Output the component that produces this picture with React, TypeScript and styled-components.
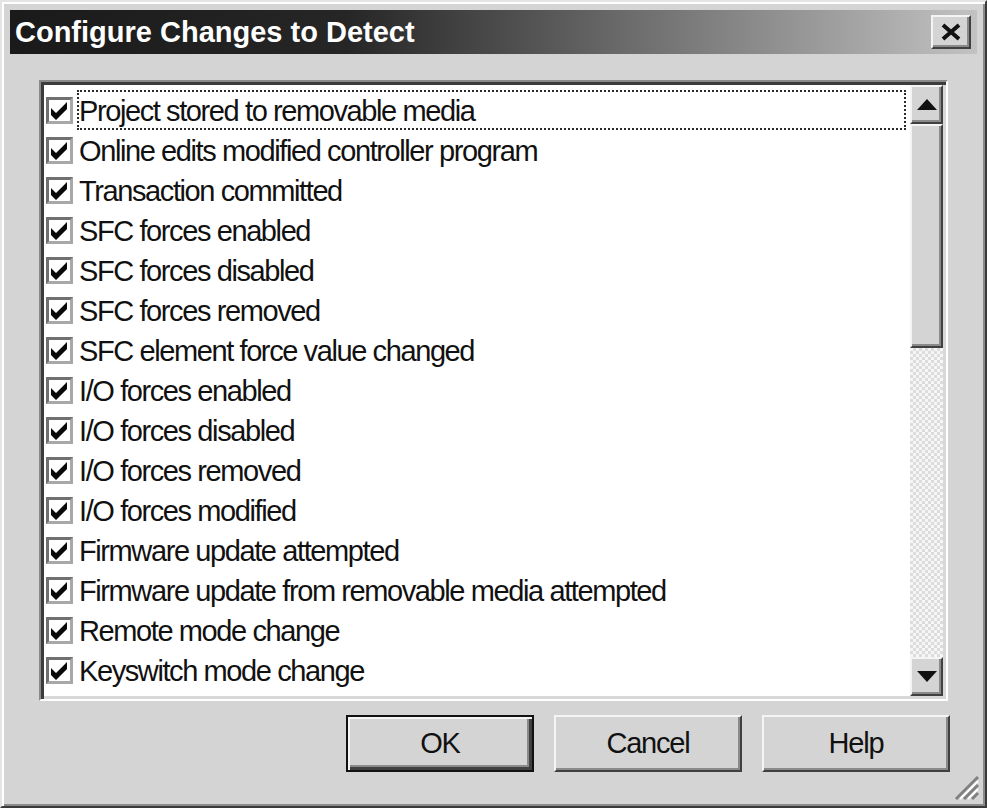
import React from "react";
import styled, { createGlobalStyle } from "styled-components";

const GlobalStyle = createGlobalStyle`
  html, body {
    margin: 0;
    padding: 0;
    background: #d4d4d4;
  }
  * {
    box-sizing: border-box;
  }
`;

const Window = styled.div`
  position: relative;
  width: 987px;
  height: 808px;
  display: flex;
  flex-direction: column;
  padding: 8px;
  background: #d4d4d4;
  border: 2px solid;
  border-color: #e4e4e4 #3a3a3a #3a3a3a #e4e4e4;
  box-shadow: inset 2px 2px #ffffff, inset -2px -2px #8a8a8a;
  font-family: "Liberation Sans", Arial, sans-serif;
`;

const TitleBar = styled.div`
  height: 44px;
  display: flex;
  align-items: center;
  justify-content: space-between;
  padding: 0 6px 0 5px;
  background: linear-gradient(to right, #1a1a1a 0%, #262626 35%, #7a7a7a 70%, #c2c2c2 100%);
`;

const Title = styled.span`
  color: #ffffff;
  font-weight: bold;
  font-size: 29px;
  line-height: 1;
`;

const Raised = styled.div`
  background: #d4d4d4;
  border: 2px solid;
  border-color: #f4f4f4 #404040 #404040 #f4f4f4;
  box-shadow: inset -2px -2px #8a8a8a;
  display: flex;
  align-items: center;
  justify-content: center;
`;

const CloseButton = styled(Raised)`
  width: 40px;
  height: 34px;
`;

const Body = styled.div`
  flex: 1;
  display: flex;
  flex-direction: column;
  padding: 26px 29px 0;
`;

const ListBox = styled.div`
  height: 621px;
  display: flex;
  background: #ffffff;
  border: 2px solid;
  border-color: #8a8a8a #ffffff #ffffff #8a8a8a;
  box-shadow: inset 3px 3px #3c3c3c, inset -3px -3px #d8d8d8;
  padding: 3px;
`;

const Items = styled.div`
  flex: 1;
  display: flex;
  flex-direction: column;
  padding-top: 5px;
`;

const Row = styled.div`
  height: 40px;
  display: flex;
  align-items: center;
  padding-left: 2px;
`;

const CheckBox = styled.div`
  width: 27px;
  height: 27px;
  flex: none;
  background: #ffffff;
  border: 3px solid;
  border-color: #707070 #a8a8a8 #a8a8a8 #707070;
  display: flex;
  align-items: center;
  justify-content: center;
`;

const Label = styled.div<{ $focused?: boolean }>`
  flex: 1;
  height: 40px;
  margin: 0 4px 0 4px;
  padding: 2px 0 0 0;
  display: flex;
  align-items: center;
  font-size: 29px;
  letter-spacing: -1.4px;
  color: #111111;
  white-space: nowrap;
  border: 2px dotted ${({ $focused }) => ($focused ? "#2a2a2a" : "transparent")};
`;

const ScrollBar = styled.div`
  width: 33px;
  display: flex;
  flex-direction: column;
`;

const ArrowButton = styled(Raised)`
  height: 39px;
  flex: none;
`;

const Thumb = styled(Raised)`
  height: 224px;
  flex: none;
`;

const Track = styled.div`
  flex: 1;
  background-color: #f2f2f2;
  background-image: conic-gradient(#dcdcdc 25%, #f6f6f6 0 50%, #dcdcdc 0 75%, #f6f6f6 0);
  background-size: 6px 6px;
`;

const ButtonRow = styled.div`
  display: flex;
  justify-content: flex-end;
  gap: 20px;
  margin-top: 14px;
  margin-right: -2px;
`;

const DialogButton = styled.button<{ $default?: boolean }>`
  width: 188px;
  height: 57px;
  font-family: "Liberation Sans", Arial, sans-serif;
  font-size: 29px;
  letter-spacing: -1.2px;
  color: #111111;
  background: #d4d4d4;
  padding: 0;
  border: 2px solid;
  border-color: ${({ $default }) =>
    $default ? "#111111" : "#f4f4f4 #404040 #404040 #f4f4f4"};
  box-shadow: ${({ $default }) =>
    $default
      ? "inset 2px 2px #f4f4f4, inset -3px -3px #404040, inset -5px -5px #8a8a8a"
      : "inset -2px -2px #8a8a8a"};
`;

const Grip = styled.svg`
  position: absolute;
  right: 6px;
  bottom: 6px;
`;

const items = [
  "Project stored to removable media",
  "Online edits modified controller program",
  "Transaction committed",
  "SFC forces enabled",
  "SFC forces disabled",
  "SFC forces removed",
  "SFC element force value changed",
  "I/O forces enabled",
  "I/O forces disabled",
  "I/O forces removed",
  "I/O forces modified",
  "Firmware update attempted",
  "Firmware update from removable media attempted",
  "Remote mode change",
  "Keyswitch mode change",
];

const Check = () => (
  <svg width="21" height="21" viewBox="0 0 21 21">
    <polygon points="2,8 7,13 18,2 18,9 7,20 2,15" fill="#0a0a0a" />
  </svg>
);

const App = () => {
  return (
    <>
      <GlobalStyle />
      <Window>
        <TitleBar>
          <Title>Configure Changes to Detect</Title>
          <CloseButton>
            <svg width="22" height="18" viewBox="0 0 22 18">
              <path d="M3 2 L19 16 M19 2 L3 16" stroke="#111111" strokeWidth="4" />
            </svg>
          </CloseButton>
        </TitleBar>
        <Body>
          <ListBox>
            <Items>
              {items.map((text, i) => (
                <Row key={text}>
                  <CheckBox>
                    <Check />
                  </CheckBox>
                  <Label $focused={i === 0}>{text}</Label>
                </Row>
              ))}
            </Items>
            <ScrollBar>
              <ArrowButton>
                <svg width="20" height="11" viewBox="0 0 20 11">
                  <polygon points="10,0 20,11 0,11" fill="#111111" />
                </svg>
              </ArrowButton>
              <Thumb />
              <Track />
              <ArrowButton>
                <svg width="20" height="11" viewBox="0 0 20 11">
                  <polygon points="0,0 20,0 10,11" fill="#111111" />
                </svg>
              </ArrowButton>
            </ScrollBar>
          </ListBox>
          <ButtonRow>
            <DialogButton $default>OK</DialogButton>
            <DialogButton>Cancel</DialogButton>
            <DialogButton>Help</DialogButton>
          </ButtonRow>
        </Body>
        <Grip width="26" height="26" viewBox="0 0 26 26">
          <path d="M25 3 L3 25 M25 11 L11 25 M25 19 L19 25" stroke="#808080" strokeWidth="3" />
          <path d="M25 7 L7 25 M25 15 L15 25" stroke="#ffffff" strokeWidth="2" />
        </Grip>
      </Window>
    </>
  );
};

export default App;
